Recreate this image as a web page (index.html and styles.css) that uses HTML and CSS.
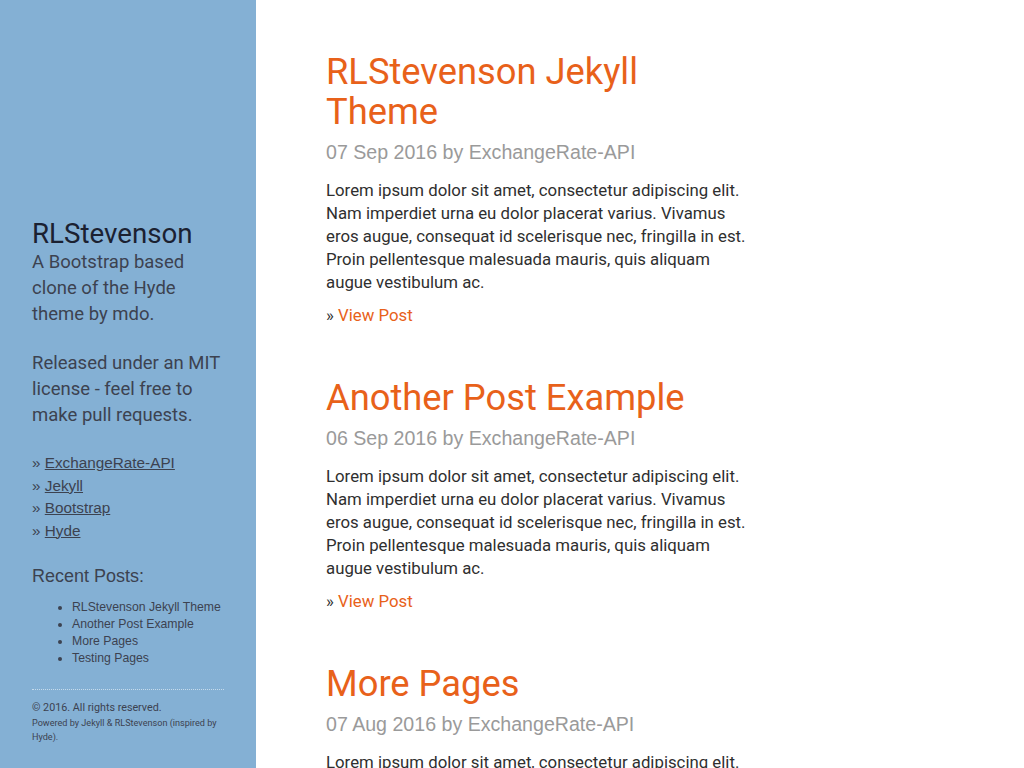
FILE: index.html
```html
<!DOCTYPE html>
<html lang="en">
<head>
<meta charset="utf-8">
<title>RLStevenson</title>
<link rel="stylesheet" href="styles.css">
</head>
<body>
<div class="layout">
  <aside class="sidebar">
    <div class="sidebar-inner">
      <h1 class="site-title">RLStevenson</h1>
      <p class="lead">A Bootstrap based clone of the Hyde theme by mdo.</p>
      <p class="lead">Released under an MIT license - feel free to make pull requests.</p>
      <ul class="nav-links">
        <li>» <a href="#">ExchangeRate-API</a></li>
        <li>» <a href="#">Jekyll</a></li>
        <li>» <a href="#">Bootstrap</a></li>
        <li>» <a href="#">Hyde</a></li>
      </ul>
      <h4 class="recent-title">Recent Posts:</h4>
      <ul class="recent">
        <li>RLStevenson Jekyll Theme</li>
        <li>Another Post Example</li>
        <li>More Pages</li>
        <li>Testing Pages</li>
      </ul>
      <footer class="side-footer">
        <p class="copy">© 2016. All rights reserved.</p>
        <p class="powered">Powered by Jekyll &amp; RLStevenson (inspired by Hyde).</p>
      </footer>
    </div>
  </aside>
  <main class="content">
    <article class="post">
      <h2 class="post-title">RLStevenson Jekyll Theme</h2>
      <div class="post-meta">07 Sep 2016 by ExchangeRate-API</div>
      <p class="post-body">Lorem ipsum dolor sit amet, consectetur adipiscing elit. Nam imperdiet urna eu dolor placerat varius. Vivamus eros augue, consequat id scelerisque nec, fringilla in est. Proin pellentesque malesuada mauris, quis aliquam augue vestibulum ac.</p>
      <div class="more">» <a href="#">View Post</a></div>
    </article>
    <article class="post">
      <h2 class="post-title">Another Post Example</h2>
      <div class="post-meta">06 Sep 2016 by ExchangeRate-API</div>
      <p class="post-body">Lorem ipsum dolor sit amet, consectetur adipiscing elit. Nam imperdiet urna eu dolor placerat varius. Vivamus eros augue, consequat id scelerisque nec, fringilla in est. Proin pellentesque malesuada mauris, quis aliquam augue vestibulum ac.</p>
      <div class="more">» <a href="#">View Post</a></div>
    </article>
    <article class="post">
      <h2 class="post-title">More Pages</h2>
      <div class="post-meta">07 Aug 2016 by ExchangeRate-API</div>
      <p class="post-body">Lorem ipsum dolor sit amet, consectetur adipiscing elit. Nam imperdiet urna eu dolor placerat varius. Vivamus eros augue, consequat id scelerisque nec, fringilla in est. Proin pellentesque malesuada mauris, quis aliquam augue vestibulum ac.</p>
      <div class="more">» <a href="#">View Post</a></div>
    </article>
  </main>
</div>
</body>
</html>
```

FILE: styles.css
```css
html, body {
  margin: 0;
  padding: 0;
  height: 100%;
  overflow: hidden;
}
body {
  font-family: Roboto, "Liberation Sans", Arial, sans-serif;
  color: #2f2f2f;
  background: #fff;
}
.layout {
  display: flex;
  height: 768px;
}
.sidebar {
  width: 256px;
  flex: 0 0 256px;
  background: #84b0d4;
  color: #3c4250;
  display: flex;
  flex-direction: column;
  justify-content: flex-end;
}
.sidebar-inner {
  padding: 0 32px 24px 32px;
}
.site-title {
  margin: 0;
  font-size: 27.7px;
  line-height: 30px;
  font-weight: 400;
  color: #1b2131;
}
.lead {
  margin: 0 0 23px 0;
  font-size: 18.5px;
  line-height: 26px;
  font-weight: 400;
}
.nav-links {
  list-style: none;
  margin: 24px 0 0 0;
  padding: 0;
  font-family: "Liberation Sans", Arial, sans-serif;
  font-size: 15.3px;
  line-height: 22.5px;
}
.nav-links a {
  color: #3c4250;
  text-decoration: underline;
}
.recent-title {
  margin: 23px 0 0 0;
  font-family: "Liberation Sans", Arial, sans-serif;
  font-size: 18px;
  line-height: 22px;
  font-weight: 400;
}
.recent {
  margin: 12px 0 0 0;
  padding-left: 40px;
  font-family: "Liberation Sans", Arial, sans-serif;
  font-size: 12.25px;
  line-height: 17px;
}
.side-footer {
  margin-top: 22px;
  border-top: 1px dotted #c6dbec;
  padding-top: 10px;
}
.copy {
  margin: 0;
  font-size: 10.75px;
  line-height: 16px;
}
.powered {
  margin: 0;
  font-size: 9.1px;
  line-height: 14px;
}
.content {
  flex: 1;
  padding: 52px 0 0 70px;
}
.post {
  width: 426px;
  margin-bottom: 51.5px;
}
.post-title {
  margin: 0;
  font-size: 36.3px;
  line-height: 40px;
  font-weight: 400;
  color: #e8611a;
}
.post-meta {
  margin-top: 6px;
  font-family: "Liberation Sans", Arial, sans-serif;
  font-size: 19.6px;
  line-height: 28px;
  color: #9a9a9a;
}
.post-body {
  margin: 12.5px 0 0 0;
  font-size: 16.8px;
  line-height: 23px;
  color: #2f2f2f;
}
.more {
  margin-top: 10px;
  font-size: 16.8px;
  line-height: 23px;
  color: #2f2f2f;
}
.more a {
  color: #e8611a;
  text-decoration: none;
}
```
